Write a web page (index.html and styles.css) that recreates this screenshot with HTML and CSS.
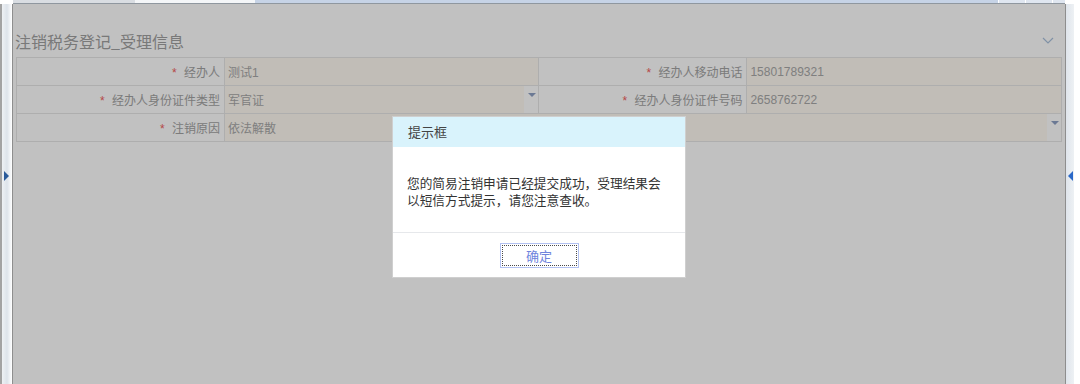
FILE: index.html
```html
<!DOCTYPE html>
<html>
<head>
    <title>注销税务登记</title>
    <link rel="stylesheet" href="styles.css">
</head>
<body>
    <div class="tabs">
        <span class="tab tab-left"></span>
        <span class="tab tab-active"></span>
        <span class="tab tab-rest"></span>
        <span class="tab tab-small"></span>
        <span class="tab tab-small"></span>
        <span class="tab tab-end"></span>
    </div>
    <div class="frame">
        <div class="side side-left">
            <span class="side-arrow arrow-right"></span>
        </div>
        <div class="main">
            <div class="panel-head">
                <h2 class="panel-title">注销税务登记_受理信息</h2>
                <svg class="chevron" width="12" height="8" viewBox="0 0 12 8">
                    <path d="M1 1 L6 6 L11 1" fill="none" stroke="#a9c0dc" stroke-width="1.2"/>
                </svg>
            </div>
            <table class="form-table">
                <colgroup>
                    <col class="col-label">
                    <col class="col-value">
                    <col class="col-label">
                    <col class="col-value">
                </colgroup>
                <tr>
                    <td class="label"><span class="req">*</span> 经办人</td>
                    <td class="value">测试1</td>
                    <td class="label"><span class="req">*</span> 经办人移动电话</td>
                    <td class="value">15801789321</td>
                </tr>
                <tr>
                    <td class="label"><span class="req">*</span> 经办人身份证件类型</td>
                    <td class="value select">军官证<span class="drop"></span></td>
                    <td class="label"><span class="req">*</span> 经办人身份证件号码</td>
                    <td class="value">2658762722</td>
                </tr>
                <tr>
                    <td class="label"><span class="req">*</span> 注销原因</td>
                    <td class="value select" colspan="3">依法解散<span class="drop"></span></td>
                </tr>
            </table>

            <div class="mask"></div>

            <div class="dialog">
                <div class="dialog-head">提示框</div>
                <div class="dialog-body">
                    您的简易注销申请已经提交成功，受理结果会<br>以短信方式提示，请您注意查收。
                </div>
                <div class="dialog-foot">
                    <button type="button" class="ok-btn">确定</button>
                </div>
            </div>
        </div>
        <div class="side side-right">
            <span class="side-arrow arrow-left"></span>
        </div>
    </div>
</body>
</html>
```

FILE: styles.css
```css
html, body {
    margin: 0;
    padding: 0;
    height: 100%;
    background: #ffffff;
    font-family: "Liberation Sans", "Noto Sans CJK SC", sans-serif;
    overflow: hidden;
}

.tabs {
    display: flex;
    height: 3px;
    margin-left: 13px;
    margin-right: 15px;
    border-bottom: 1px solid #8f979f;
}
.tab {
    display: block;
    height: 3px;
}
.tab-left {
    width: 122px;
    background: #d9dde2;
}
.tab-active {
    width: 120px;
    background: #f4f6f8;
}
.tab-rest {
    flex: 1;
    background: #c6d3e6;
}
.tab-small {
    width: 26px;
    background: #dfe6f0;
    border-left: 1px solid #ffffff;
}
.tab-end {
    width: 12px;
    background: #dfe6f0;
    border-left: 1px solid #ffffff;
}

.frame {
    display: flex;
    height: calc(100% - 4px);
}

.side {
    position: relative;
    background: #ffffff;
}
.side-left {
    width: 10px;
    border-left: 2px solid #a3a3a3;
    border-right: 1px solid #8e8e8e;
    background: linear-gradient(to right, #eef1f4, #dde3ea, #ffffff);
}
.side-right {
    width: 8px;
    margin-right: 6px;
    border-left: 1px solid #8e8e8e;
    background: linear-gradient(to right, #dfe5ec, #eef1f4);
}
.side-arrow {
    position: absolute;
    top: 167px;
    width: 0;
    height: 0;
    border-top: 5px solid transparent;
    border-bottom: 5px solid transparent;
}
.arrow-right {
    left: 2px;
    border-left: 5px solid #2a5a9a;
}
.arrow-left {
    left: 2px;
    border-right: 5px solid #2a68c8;
}

.main {
    position: relative;
    flex: 1;
    background: #ffffff;
    padding: 0 3px;
}

.panel-head {
    display: flex;
    justify-content: space-between;
    align-items: center;
    padding: 25px 8px 0 0;
    height: 28px;
}
.panel-title {
    margin: 0 0 4px -1px;
    font-size: 16px;
    font-weight: normal;
    color: #a0a0a0;
    font-family: "Noto Sans CJK SC", sans-serif;
}
.chevron {
    margin-top: -4px;
}

.form-table {
    width: 100%;
    border-collapse: collapse;
    font-size: 12px;
    font-family: "Liberation Sans", "Noto Sans CJK SC", sans-serif;
}
.col-label {
    width: 19.9%;
}
.col-value {
    width: 30.1%;
}
.form-table td {
    height: 27px;
    padding: 0;
    border: 1px solid #e6e6e6;
}
.label {
    text-align: right;
    padding-right: 4px !important;
    color: #a3a3a3;
    background: #ffffff;
}
.req {
    color: #f06060;
    margin-right: 4px;
}
.value {
    position: relative;
    padding-left: 3px !important;
    color: #a8a8a8;
    background: #fffaf2;
}
.select {
    padding-right: 16px;
}
.drop {
    position: absolute;
    right: 0;
    top: 0;
    bottom: 0;
    width: 14px;
    background: #ffffff;
}
.drop::after {
    content: "";
    position: absolute;
    left: 4px;
    top: 7px;
    border-left: 4px solid transparent;
    border-right: 4px solid transparent;
    border-top: 4px solid #8ea0c4;
}

.mask {
    position: absolute;
    inset: 0;
    background: rgba(0, 0, 0, 0.245);
}

.dialog {
    position: absolute;
    left: 379px;
    top: 112px;
    width: 292px;
    background: #ffffff;
    border: 1px solid #cfcfcf;
    font-family: "Noto Sans CJK SC", sans-serif;
    font-size: 13px;
    color: #333333;
}
.dialog-head {
    height: 30px;
    line-height: 30px;
    padding-left: 15px;
    background: #d9f3fc;
    color: #444444;
}
.dialog-body {
    padding: 27px 14px 24px 14px;
    line-height: 17px;
    height: 34px;
    font-size: 12.7px;
}
.dialog-foot {
    border-top: 1px solid #e6e8eb;
    padding: 10px 0 9px;
    text-align: center;
}
.ok-btn {
    width: 79px;
    height: 25px;
    padding: 0;
    background: #ffffff;
    border: 1px solid #b3c2f2;
    outline: 1px dotted #4a4a4a;
    outline-offset: -3px;
    color: #6f84dd;
    font-family: "Noto Sans CJK SC", sans-serif;
    font-size: 13px;
    cursor: pointer;
}
```
